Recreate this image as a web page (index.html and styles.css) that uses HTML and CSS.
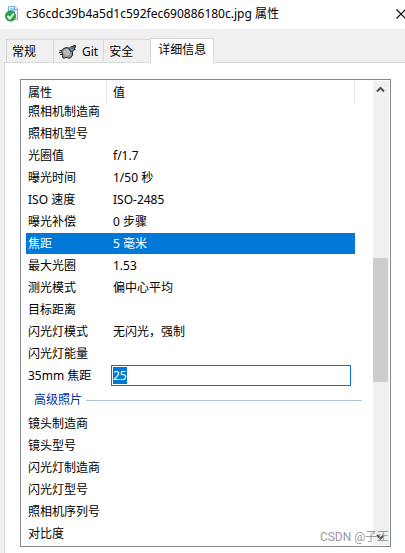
FILE: index.html
```html
<!DOCTYPE html>
<html lang="zh-CN">
<head>
<meta charset="utf-8">
<title>属性</title>
<link rel="stylesheet" href="styles.css">
</head>
<body>
<header class="titlebar">
  <svg class="file-icon" width="14" height="16" viewBox="0 0 14 16" aria-hidden="true">
    <path d="M3.500 .5H10l2.500 2.500V13.500H3.500z" fill="#e9f3fb" stroke="#7fb2dc"/>
    <path d="M5 2h5v5H5z" fill="#9dcbee"/>
    <path d="M9.500 .5V3.500H12.500" fill="#fff" stroke="#6aa3d3"/>
    <circle cx="5.500" cy="10" r="5.200" fill="#2ba640" stroke="#138a2b" stroke-width=".6"/>
    <path d="M2.500 10l2.300 2.500L8.800 7.500" fill="none" stroke="#fff" stroke-width="1.900"/>
  </svg>
  <h1 class="title">c36cdc39b4a5d1c592fec690886180c.jpg 属性</h1>
  <button class="close" type="button" aria-label="关闭">
    <svg width="10" height="10" viewBox="0 0 10 10"><path d="M.5.5l9 9M9.500.5l-9 9" fill="none" stroke="#000" stroke-width="1.100"/></svg>
  </button>
</header>
<nav class="tabs" role="tablist">
  <button class="tab" type="button" role="tab">常规</button>
  <button class="tab tab-git" type="button" role="tab">
    <svg width="17" height="15" viewBox="0 0 17 15" aria-hidden="true">
      <path d="M2.500 6L4.500 3.500 8 2.500l3 1 2.500 3V10L11.500 13H8.500L7.500 12 6.500 13H4L3.500 10.500z" fill="#909090" stroke="#222"/>
      <path d="M4 6.500l2-2 3-.5 2 2v3l-2 1.500H6z" fill="#b9b9b9"/>
      <path d="M0 7.500h2M.5 5.500h2M1 9.500h2" fill="none" stroke="#1a1a1a"/>
      <path d="M10 3.500l2-2h3.500V5l-2 1.500h-2z" fill="#6f8092" stroke="#222" stroke-width=".8"/>
      <path d="M14.500 .5h2v2M15 4.500h1.500" stroke="#111" fill="none"/>
      <path d="M12.500 3h2" stroke="#2b62a8" stroke-width="1.500"/>
    </svg>
    <span>Git</span>
  </button>
  <button class="tab" type="button" role="tab">安全</button>
  <button class="tab tab-active" type="button" role="tab" aria-selected="true">详细信息</button>
</nav>
<main class="panel">
  <section class="list">
    <div class="list-body">
      <table class="props">
        <colgroup><col class="col-name"><col><col class="col-end"></colgroup>
        <thead><tr><th scope="col">属性</th><th scope="col">值</th><td></td></tr></thead>
        <tbody>
          <tr class="clipped"><td>照相机制造商</td><td></td></tr>
          <tr><td>照相机型号</td><td></td></tr>
          <tr><td>光圈值</td><td>f/1.7</td></tr>
          <tr><td>曝光时间</td><td>1/50 秒</td></tr>
          <tr><td>ISO 速度</td><td>ISO-2485</td></tr>
          <tr><td>曝光补偿</td><td>0 步骤</td></tr>
          <tr class="selected"><td>焦距</td><td>5 毫米</td></tr>
          <tr><td>最大光圈</td><td>1.53</td></tr>
          <tr><td>测光模式</td><td>偏中心平均</td></tr>
          <tr><td>目标距离</td><td></td></tr>
          <tr><td>闪光灯模式</td><td>无闪光，强制</td></tr>
          <tr><td>闪光灯能量</td><td></td></tr>
          <tr><td><label for="focal">35mm 焦距</label></td><td class="edit"><input id="focal" type="text" value="25"></td></tr>
          <tr><th class="group" colspan="3" scope="rowgroup"><div class="group-line">高级照片</div></th></tr>
          <tr><td>镜头制造商</td><td></td></tr>
          <tr><td>镜头型号</td><td></td></tr>
          <tr><td>闪光灯制造商</td><td></td></tr>
          <tr><td>闪光灯型号</td><td></td></tr>
          <tr><td>照相机序列号</td><td></td></tr>
          <tr><td>对比度</td><td></td></tr>
        </tbody>
      </table>
    </div>
    <div class="scrollbar" aria-hidden="true">
      <svg class="arrow" width="16" height="17" viewBox="0 0 16 17"><path d="M4 10.500l3.500-3.500 3.500 3.500" fill="none" stroke="#505050" stroke-width="2"/></svg>
      <div class="track"><div class="thumb"></div></div>
      <svg class="arrow" width="16" height="17" viewBox="0 0 16 17"><path d="M4 7l3.500 3.500L11 7" fill="none" stroke="#505050" stroke-width="2"/></svg>
    </div>
    <div class="watermark">CSDN @子正</div>
  </section>
</main>
<script src="main.js"></script>
</body>
</html>
```
FILE: styles.css
```css
* {
  box-sizing: border-box;
}

body {
  margin: 0;
  min-height: 100vh;
  display: flex;
  flex-direction: column;
  background: #f0f0f0;
  color: #000;
  font: 12px/14px "Noto Sans", "Noto Sans CJK SC", sans-serif;
  overflow: hidden;
}

button,
input {
  font: inherit;
  color: inherit;
}

.titlebar {
  display: flex;
  align-items: center;
  height: 29px;
  padding: 0 0 2px 5px;
  background: #fff;
}

.file-icon {
  flex: none;
  margin-right: 7px;
}

.title {
  flex: 1;
  margin: 0;
  font-size: 12px;
  font-weight: 400;
  white-space: nowrap;
}

.close {
  display: flex;
  flex: none;
  width: 9px;
  padding: 0;
  border: 0;
  background: none;
}

.close svg {
  flex: none;
}

.tabs {
  display: flex;
  align-items: flex-end;
  padding: 9px 0 0 6px;
}

.tab {
  display: flex;
  align-items: center;
  gap: 6px;
  height: 23px;
  padding: 2px 17px 0 5px;
  border: 1px solid #d9d9d9;
  border-right: 0;
  border-bottom: 0;
  background: #f0f0f0;
}

.tab-git {
  padding-right: 5px;
}

.tab-active {
  position: relative;
  height: 25px;
  margin-bottom: -1px;
  padding: 0 7px 2px;
  border-right: 1px solid #d9d9d9;
  background: #fff;
}

.panel {
  flex: 1;
  margin-left: 4px;
  padding: 16px 14px 6px 15px;
  border: 1px solid #d9d9d9;
  border-width: 1px 0 0 1px;
  background: #fff;
}

.list {
  position: relative;
  display: flex;
  padding-right: 1px;
  border: 1px solid #828790;
}

.list-body {
  flex: 1;
  padding: 0 11px 1px 5px;
}

.props {
  width: 100%;
  table-layout: fixed;
  border-spacing: 0;
}

.col-name {
  width: 81px;
}

.col-end {
  width: 7px;
}

.props td,
.props th {
  height: 22px;
  padding: 4px 2px 3px;
  border-bottom: 1px solid #fff;
  background-clip: padding-box;
  font-weight: 400;
  text-align: left;
  white-space: nowrap;
}

.props td:nth-child(2),
.props th:nth-child(2) {
  padding-left: 6px;
}

.props thead th {
  height: 25px;
  border-right: 1px solid #e5e5e5;
}

.props .clipped td {
  height: 18px;
  padding: 0 2px 3px;
}

.selected td {
  background: #0078d7;
  color: #fff;
}

.props td.edit:nth-child(2) {
  padding: 0 4px;
}

.edit input {
  display: block;
  width: 100%;
  height: 21px;
  padding: 0 1px;
  border: 1px solid #0078d7;
  border-radius: 0;
  outline: 0;
  background: #fff;
}

.edit input::selection {
  background: #0078d7;
  color: #fff;
}

.props .group {
  height: 26px;
  padding: 1px 0 0 8px;
  color: #003399;
}

.group-line {
  display: flex;
  align-items: center;
  gap: 4px;
}

.group-line::after {
  content: "";
  flex: 1;
  height: 1px;
  background: #b0c0e0;
}

.scrollbar {
  display: flex;
  flex-direction: column;
  width: 16px;
  margin: 1px 0;
  background: #f0f0f0;
}

.arrow {
  flex: none;
}

.track {
  display: flex;
  flex-direction: column;
  flex: 1;
}

.track::before {
  content: "";
  flex: 160;
}

.track::after {
  content: "";
  flex: 146;
}

.thumb {
  flex: 124;
  width: 15px;
  background: #cdcdcd;
}

.watermark {
  position: absolute;
  right: 1px;
  bottom: 2px;
  color: #999;
  font-family: Roboto, "Noto Sans CJK SC", sans-serif;
}
```
FILE: main.js
```js
const focal = document.getElementById("focal");
focal.focus();
focal.select();
```
